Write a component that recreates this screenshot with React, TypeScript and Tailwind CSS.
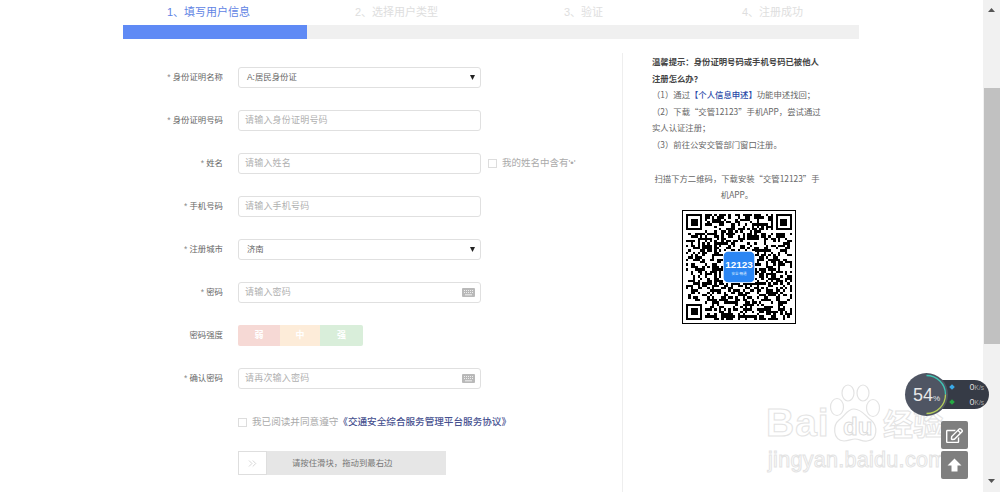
import { FaRegEdit } from "react-icons/fa";
import { ChevronsRight } from "lucide-react";

const cjk = { fontFamily: '"Liberation Sans", "Noto Sans CJK SC", sans-serif' };
const cjkFirst = { fontFamily: '"Noto Sans CJK SC", "Liberation Sans", sans-serif' };

const steps = [
  { label: "1、填写用户信息", active: true },
  { label: "2、选择用户类型", active: false },
  { label: "3、验证", active: false },
  { label: "4、注册成功", active: false },
];

const KeyboardIcon = () => (
  <svg width="13" height="9" viewBox="0 0 13 9" className="shrink-0">
    <rect width="13" height="9" rx="1" fill="#b9b9b9" />
    <path d="M2 2.5h9M2 4.5h9" stroke="#eee" strokeWidth="1" strokeDasharray="1 1" />
    <path d="M3 6.8h7" stroke="#eee" strokeWidth="1" />
  </svg>
);

const Caret = () => (
  <svg width="5" height="5" viewBox="0 0 5 5" className="shrink-0">
    <path d="M0 0h5L2.5 5z" fill="#222" />
  </svg>
);

const Label = ({ text, required = true }: { text: string; required?: boolean }) => (
  <div className="w-[100px] shrink-0 text-right text-[8.4px] leading-[21px] text-[#666]">
    {required && <span className="text-[#888]">* </span>}
    {text}
  </div>
);

const Field = ({ placeholder, keyboard }: { placeholder: string; keyboard?: boolean }) => (
  <div className="flex h-[21px] w-[243px] items-center justify-between rounded-[3px] border border-[#e0e0e0] pl-[6px] pr-[5px] text-[9px] tracking-[0.2px] text-[#b0b0b0]">
    <span>{placeholder}</span>
    {keyboard && <KeyboardIcon />}
  </div>
);

const Select = ({ value }: { value: string }) => (
  <div className="flex h-[21px] w-[243px] items-center justify-between rounded-[3px] border border-[#e0e0e0] pl-[8px] pr-[5px] text-[8.4px] text-[#666]">
    <span>{value}</span>
    <Caret />
  </div>
);

const Row = ({ children }: { children: React.ReactNode }) => (
  <div className="flex h-[21px] items-center gap-[15px]">{children}</div>
);

const Check = () => <span className="h-[9px] w-[9px] shrink-0 border border-[#ddd] bg-white" />;

// not the real code, just a stable pattern that reads like the reference's QR
const QrCode = () => {
  const n = 45;
  const cells: React.ReactElement[] = [];
  let seed = 12123;
  const next = () => {
    seed = (seed * 1103515245 + 12345) & 0x7fffffff;
    return (seed >> 16) & 1;
  };
  const inFinder = (x: number, y: number) =>
    (x < 8 && y < 8) || (x >= n - 8 && y < 8) || (x < 8 && y >= n - 8);
  for (let y = 0; y < n; y++) {
    for (let x = 0; x < n; x++) {
      const bit = next();
      if (!inFinder(x, y) && bit) cells.push(<rect key={`${x}-${y}`} x={x} y={y} width="1" height="1" />);
    }
  }
  const finder = (x: number, y: number) => (
    <g key={`f${x}${y}`}>
      <rect x={x} y={y} width="7" height="7" />
      <rect x={x + 1} y={y + 1} width="5" height="5" fill="#fff" />
      <rect x={x + 2} y={y + 2} width="3" height="3" />
    </g>
  );
  return (
    <div className="ml-[30px] mt-[7px] flex h-[114px] w-[114px] items-center justify-center border-[1.5px] border-black bg-white">
      <svg width="106" height="106" viewBox="0 0 45 45" shapeRendering="crispEdges">
        {cells}
        {finder(0, 0)}
        {finder(38, 0)}
        {finder(0, 38)}
        <rect x="15.5" y="15.5" width="14" height="14" fill="#fff" />
        <rect x="16" y="16" width="13" height="13" rx="1.8" fill="#2b86f3" shapeRendering="auto" />
        <text x="22.5" y="23" textAnchor="middle" fontSize="4.2" fontWeight="700" fill="#fff" style={cjk} shapeRendering="auto">
          12123
        </text>
        <text x="22.5" y="26" textAnchor="middle" fontSize="1.5" fill="#dbeafe" style={cjk}>
          安全·畅通
        </text>
      </svg>
    </div>
  );
};

const Watermark = () => (
  <div className="pointer-events-none absolute left-[766px] top-[384px] h-[90px] w-[190px] select-none">
    <span className="absolute left-0 top-[16px] text-[39px] font-bold leading-[46px] tracking-[1px] text-white [-webkit-text-stroke:1px_#e3e3e3]">
      Bai
    </span>
    <svg width="56" height="60" viewBox="0 0 56 60" className="absolute left-[60px] top-0" fill="#fff" stroke="#e3e3e3" strokeWidth="1.2">
      <ellipse cx="11" cy="23" rx="6.5" ry="8.5" />
      <ellipse cx="22" cy="9" rx="6" ry="8" />
      <ellipse cx="37" cy="9" rx="6" ry="8" />
      <ellipse cx="47" cy="24" rx="6.5" ry="8.5" />
      <path d="M28 25c-7 0-9 7-15 11-6 5-7 20 5 21 5 0 7-2 11-2 5 0 7 3 12 2 11-1 11-15 4-21-6-4-9-11-17-11z" />
    </svg>
    <span className="absolute left-[77px] top-[31px] text-[24px] font-bold leading-[24px] text-white [-webkit-text-stroke:1px_#dcdcdc]">
      du
    </span>
    <span className="absolute left-[117px] top-[23px] text-[30px] font-bold leading-[36px] text-white [-webkit-text-stroke:1px_#e3e3e3]">
      经验
    </span>
    <span className="absolute left-[2px] top-[63px] whitespace-nowrap text-[21.5px] leading-[26px] tracking-[0.3px] text-white [-webkit-text-stroke:1px_#e3e3e3]">
      jingyan.baidu.com
    </span>
  </div>
);

const SpeedWidget = () => (
  <div className="absolute left-[905px] top-[373px] h-[44px] w-[85px]">
    <div className="absolute left-[20px] top-[7px] flex h-[29px] w-[64px] flex-col justify-center gap-[4px] rounded-r-full bg-[#363b46] pl-[7px] pr-[5px] text-[6.5px] leading-[11px] text-[#aaa]">
      <div className="flex items-center justify-between">
        <span className="ml-[18px] h-[4px] w-[4px] rotate-45 bg-[#3aa9e8]" />
        <span><span className="text-[9px] text-[#ddd]">0</span>K/s</span>
      </div>
      <div className="flex items-center justify-between">
        <span className="ml-[18px] h-[4px] w-[4px] rotate-45 bg-[#27a844]" />
        <span><span className="text-[9px] text-[#ddd]">0</span>K/s</span>
      </div>
    </div>
    <div className="absolute left-0 top-0 flex h-[43px] w-[43px] items-center justify-center rounded-full bg-[#4f5563]">
      <svg width="43" height="43" viewBox="0 0 43 43" className="absolute inset-0">
        <path d="M21.5 2.5A19 19 0 0 1 40.5 21.5" fill="none" stroke="#3ec6b4" strokeWidth="1.3" />
        <path d="M40.5 21.5A19 19 0 0 1 21.5 40.5" fill="none" stroke="#b6cf5a" strokeWidth="1.3" />
      </svg>
      <span className="relative text-[18px] font-light leading-none text-[#e8e8e8]">
        54<span className="text-[8px]">%</span>
      </span>
    </div>
  </div>
);

export default function App() {
  return (
    <div className="relative flex h-[492px] w-[1000px] overflow-hidden bg-white" style={cjk}>
      <main className="flex-1 pl-[123px] pr-[124px]">
        <div className="flex h-[25px] items-center text-[11px] text-[#dedede]">
          {steps.map((s, i) => (
            <div
              key={s.label}
              className={
                i === 0
                  ? "w-[184px] pl-[44px] text-[#5f84e4]"
                  : i === 1
                    ? "w-[184px] pl-[48px]"
                    : i === 2
                      ? "w-[184px] pl-[73px]"
                      : "w-[184px] pl-[67px]"
              }
            >
              {s.label}
            </div>
          ))}
        </div>
        <div className="h-[14px] bg-[#f0f0f0]">
          <div className="h-full w-[184px] bg-[#5f8af5]" />
        </div>

        <div className="flex">
          <section className="mt-[14px] flex h-[439px] w-[500px] shrink-0 flex-col gap-[22px] border-r border-[#eeeeee] pt-[14px]">
            <Row><Label text="身份证明名称" /><Select value="A:居民身份证" /></Row>
            <Row><Label text="身份证明号码" /><Field placeholder="请输入身份证明号码" /></Row>
            <Row>
              <Label text="姓名" />
              <Field placeholder="请输入姓名" />
              <div className="-ml-[8px] flex items-center gap-[5px] whitespace-nowrap text-[9.5px] text-[#aaa]">
                <Check />
                <span>我的姓名中含有'•'</span>
              </div>
            </Row>
            <Row><Label text="手机号码" /><Field placeholder="请输入手机号码" /></Row>
            <Row><Label text="注册城市" /><Select value="济南" /></Row>
            <Row><Label text="密码" /><Field placeholder="请输入密码" keyboard /></Row>
            <Row>
              <Label text="密码强度" required={false} />
              <div className="flex h-[21px] w-[125px] text-center text-[9px] font-bold leading-[21px] text-white">
                <div className="w-[42px] rounded-l-[2px] bg-[#f6d9d5]">弱</div>
                <div className="w-[40px] bg-[#fdecd9]">中</div>
                <div className="w-[43px] rounded-r-[2px] bg-[#d9eeda]">强</div>
              </div>
            </Row>
            <Row><Label text="确认密码" /><Field placeholder="请再次输入密码" keyboard /></Row>
            <div className="ml-[115px] mt-[5px] flex h-[12px] items-center gap-[5px] whitespace-nowrap text-[9.6px] text-[#aaa]">
              <Check />
              <span>
                我已阅读并同意遵守
                <span className="font-medium text-[#46508f]">《交通安全综合服务管理平台服务协议》</span>
              </span>
            </div>
            <div className="ml-[115px] mt-[1px] flex h-[24px] w-[208px] items-center bg-[#e6e6e6] text-[8.4px] text-[#777]">
              <div className="flex h-full w-[29px] items-center justify-center border border-[#dedede] bg-white text-[#b5b5b5]">
                <ChevronsRight size={13} strokeWidth={1} />
              </div>
              <span className="ml-[25px]">请按住滑块，拖动到最右边</span>
            </div>
          </section>

          <aside className="ml-[29px] w-[170px] pt-[14px] text-[8.35px] leading-[16.6px] text-[#666]" style={cjkFirst}>
            <p className="font-bold text-[#444]">温馨提示：身份证明号码或手机号码已被他人注册怎么办？</p>
            <p>（1）通过<span className="font-medium text-[#2a4aa8]">【个人信息申述】</span>功能申述找回；</p>
            <p>（2）下载“交管12123”手机APP，尝试通过实人认证注册；</p>
            <p>（3）前往公安交管部门窗口注册。</p>
            <p className="mt-[17px] text-center">扫描下方二维码，下载安装“交管12123”手机APP。</p>
            <QrCode />
          </aside>
        </div>
      </main>

      <div className="flex h-full w-[17px] shrink-0 flex-col items-center bg-[#f1f1f1]">
        <svg width="7" height="4" viewBox="0 0 7 4" className="mt-[8px]"><path d="M0 4h7L3.5 0z" fill="#555" /></svg>
        <div className="mt-[76px] h-[256px] w-[16px] bg-[#c1c1c1]" />
        <svg width="7" height="4" viewBox="0 0 7 4" className="mt-[135px]"><path d="M0 0h7L3.5 4z" fill="#555" /></svg>
      </div>

      <Watermark />
      <SpeedWidget />
      <div className="absolute left-[941px] top-[421px] flex flex-col gap-[2px]">
        <div className="flex h-[28px] w-[27px] items-center justify-center rounded-[2px] bg-[#7f7f7f] text-white">
          <FaRegEdit size={17} />
        </div>
        <div className="flex h-[28px] w-[27px] items-center justify-center rounded-[2px] bg-[#7f7f7f] text-white">
          <svg width="15" height="14" viewBox="0 0 15 14" fill="#fff">
            <path d="M7.5 0.5 14.5 7.5H10.5V13.5H4.5V7.5H0.5z" />
          </svg>
        </div>
      </div>
    </div>
  );
}
